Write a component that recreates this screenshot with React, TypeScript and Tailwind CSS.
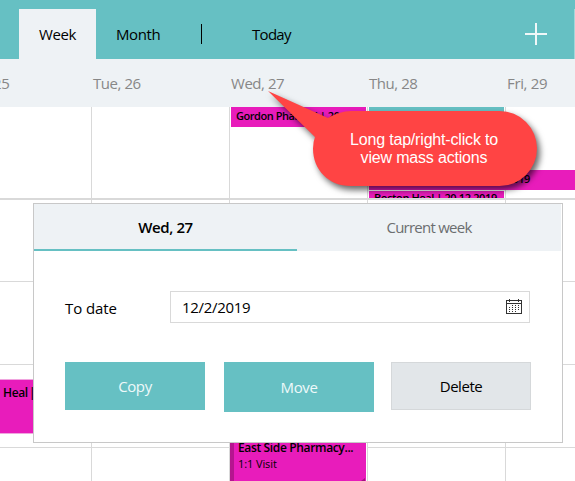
import React from "react";

const sans = "font-['Open_Sans','Noto_Sans',sans-serif]";

function Header() {
  return (
    <header className="flex h-[59px] items-end bg-[#66c0c3] pl-[19px] text-[15px] text-black">
      <div className="flex h-[50px] w-[77px] items-center bg-[#eef2f5] pl-5">
        <span className="tracking-[-0.4px]">Week</span>
      </div>
      <div className="flex h-[50px] w-[105px] items-center pl-5">
        <span className="tracking-[-0.4px]">Month</span>
      </div>
      <div className="mb-[15px] h-5 w-px bg-black" />
      <div className="flex h-[50px] items-center pl-[50px]">
        <span className="tracking-[-0.7px]">Today</span>
      </div>
      <svg className="mr-[27px] mb-[14px] ml-auto h-[22px] w-[22px]" viewBox="0 0 22 22" shapeRendering="crispEdges">
        <path d="M10 0h2v22h-2zM0 10h22v2H0z" fill="#f0f7f8" />
      </svg>
      <div className="h-[50px] w-px bg-[#a3d6d9]" />
    </header>
  );
}

const columns = "grid grid-cols-[91px_138px_138px_138px_70px]";

function DayHeader() {
  return (
    <div className={`${columns} h-12 items-center bg-[#eef2f5] text-[15px] leading-5 text-[#878787]`}>
      <span className="-ml-[7px] tracking-[-0.45px]">25</span>
      <span className="pl-0.5 tracking-[-0.45px]">Tue, 26</span>
      <span className="pl-0.5 tracking-[-0.45px]">Wed, 27</span>
      <span className="pl-0.5 tracking-[-0.45px]">Thu, 28</span>
      <span className="pl-0.5 tracking-[-0.35px]">Fri, 29</span>
    </div>
  );
}

function AllDay() {
  const cell = "border-l border-[#d9d9d9]";
  return (
    <div className={`${columns} relative h-[93px] overflow-hidden border-b-2 border-[#d9d9d9] text-[11px] font-semibold tracking-[-0.4px]`}>
      <div />
      <div className={cell} />
      <div className={`${cell} pr-px pl-px`}>
        <div className="h-5 overflow-hidden bg-[#e81cbb] pl-[5px] leading-[17px] tracking-[-0.45px] whitespace-nowrap">
          Gordon Pharmal | 20.12.2019
        </div>
      </div>
      <div className={`${cell} pr-px pl-px`}>
        <div className="h-5 bg-[#66c0c3]" />
        <div className="mt-16 h-[7px] overflow-hidden bg-[#e81cbb] pl-[5px] whitespace-nowrap">
          <div className="leading-[14px]">Boston Heal | 20.12.2019</div>
        </div>
      </div>
      <div className={cell} />
      <div className="absolute top-[63px] left-[369px] h-5 w-[206px] bg-[#e81cbb] pr-[45px] text-right leading-[17px]">Boston Heal | 20.12.2019</div>
    </div>
  );
}

function Hours() {
  const rows = ["h-[82px]", "h-[83px]", "h-[83px]", "h-[83px]"];
  return (
    <div className="relative h-[281px] overflow-hidden">
      {rows.map((height, i) => (
        <div key={i} className={`${columns} ${height} border-b border-[#d9d9d9]`}>
          <div />
          <div className="border-l border-[#d9d9d9]" />
          <div className="border-l border-[#d9d9d9]" />
          <div className="border-l border-[#d9d9d9]" />
          <div className="border-l border-[#d9d9d9]" />
        </div>
      ))}
      <div className="absolute top-[179px] left-0 h-[55px] w-[91px] border-y border-[#f0a5df] bg-[#e81cbb] pt-[5px] pl-[3px] text-[12px] leading-4 font-semibold">
        <span className="tracking-[-0.35px] [word-spacing:-1.5px]">Heal |</span>
      </div>
      <div className="absolute top-[230px] left-[230px] h-[51px] w-[137px] border-r border-white bg-[#e81cbb]">
        <div className="flex h-full border-l-4 border-[#b5158f] pt-[10px] pl-1 text-[12px] leading-4 whitespace-nowrap">
          <div>
            <div className="font-semibold tracking-[-0.35px]">East Side Pharmacy...</div>
            <div className="text-[11px] tracking-[-0.1px]">1:1 Visit</div>
          </div>
        </div>
        <svg className="absolute right-px bottom-0 h-[3px] w-1" viewBox="0 0 4 3">
          <path d="M4 0v3H0z" fill="#a1137f" />
        </svg>
      </div>
    </div>
  );
}

function CalendarIcon() {
  return (
    <svg className="h-4 w-4" viewBox="0 0 16 16" shapeRendering="crispEdges" fill="#333">
      <path d="M0 1h16v14H0zM1 2v2h14V2zM1 5v9h14V5z" fillRule="evenodd" />
      <path d="M3 0h1v3H3zM12 0h1v3h-1z" />
      <path d="M6 6h1v1H6zM9 6h1v1H9zM12 6h1v1h-1zM3 8h1v1H3zM6 8h1v1H6zM9 8h1v1H9zM12 8h1v1h-1zM3 10h1v1H3zM6 10h1v1H6zM9 10h1v1H9zM12 10h1v1h-1zM3 12h1v1H3zM6 12h1v1H6zM9 12h1v1H9z" />
    </svg>
  );
}

function Dialog() {
  return (
    <div className="absolute top-[203px] left-[33px] h-[240px] w-[530px] border border-[#c8c8c8] bg-white text-[15px]">
      <div className="mr-px flex h-[47px] bg-[#eef2f5]">
        <div className="flex w-[263px] items-center justify-center border-b-2 border-[#66c0c3] pt-0.5 font-semibold">
          <span className="tracking-[-0.4px]">Wed, 27</span>
        </div>
        <div className="flex flex-1 items-center justify-center text-[#6b6e70]">
          <span className="tracking-[-0.75px]">Current week</span>
        </div>
      </div>
      <div className="mt-10 flex items-center pl-[31px]">
        <span className="w-[105px] pt-0.5 tracking-[-0.1px]">To date</span>
        <div className="flex h-8 w-[360px] items-center justify-between border border-[#d9d9d9] pr-[7px] pl-[11px]">
          <span className="tracking-[-0.3px]">12/2/2019</span>
          <CalendarIcon />
        </div>
      </div>
      <div className="mt-[39px] flex items-start pl-[31px]">
        <button className="h-12 w-[140px] bg-[#66c0c3] tracking-[-0.4px] text-[#eef9fa]">Copy</button>
        <button className="ml-[19px] h-[50px] w-[150px] bg-[#66c0c3] tracking-[-0.4px] text-[#eef9fa]">Move</button>
        <button className="ml-[17px] h-12 w-[140px] border border-[#d5d8da] bg-[#e2e6e9] tracking-[-0.45px]">Delete</button>
      </div>
    </div>
  );
}

function Callout() {
  return (
    <div className="absolute top-[81px] left-[258px] h-[120px] w-[300px]">
      <svg className="h-full w-full overflow-visible drop-shadow-[3px_4px_3px_rgba(0,0,0,0.6)]" viewBox="258 81 300 120">
        <path d="M268 91L328 118C335 114 343 111 351 111H499.500A37.500 37.500 0 0 1 499.500 186H350.500C329 186 313 170 313 148.500Q313 142 315 137Z" fill="#ff4444" />
      </svg>
      <div className="absolute top-[50px] left-[55px] w-[222px] text-center font-['Liberation_Sans',sans-serif] text-[16px] leading-[18px] tracking-[-0.18px] text-white">
        Long tap/right-click to
        <br />
        view mass actions
      </div>
    </div>
  );
}

export default function App() {
  return (
    <div className={`relative h-[481px] w-[575px] overflow-hidden bg-white text-black ${sans}`}>
      <Header />
      <DayHeader />
      <AllDay />
      <Hours />
      <Dialog />
      <Callout />
    </div>
  );
}
